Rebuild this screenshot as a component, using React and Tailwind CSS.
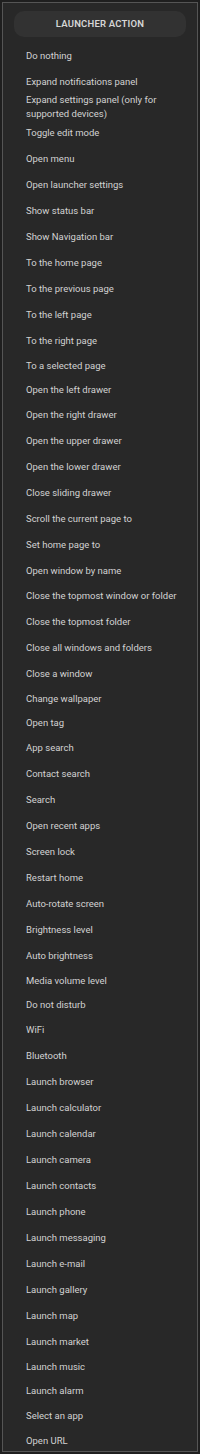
// Launcher action picker: header pill and a flat list of actions
const actions = [
  ["Do nothing", "h-[26px]"],
  ["Expand notifications panel", "h-[25px]"],
  ["Expand settings panel (only for supported devices)", "h-[25px]"],
  ["Toggle edit mode", "h-[27px]"],
  ["Open menu", "h-[26px]"],
  ["Open launcher settings", "h-[26px]"],
  ["Show status bar", "h-[26px]"],
  ["Show Navigation bar", "h-[26px]"],
  ["To the home page", "h-[26px]"],
  ["To the previous page", "h-[26px]"],
  ["To the left page", "h-[26px]"],
  ["To the right page", "h-[26px]"],
  ["To a selected page", "h-[24px]"],
  ["Open the left drawer", "h-[24px]"],
  ["Open the right drawer", "h-[26px]"],
  ["Open the upper drawer", "h-[26px]"],
  ["Open the lower drawer", "h-[26px]"],
  ["Close sliding drawer", "h-[26px]"],
  ["Scroll the current page to", "h-[26px]"],
  ["Set home page to", "h-[26px]"],
  ["Open window by name", "h-[25px]"],
  ["Close the topmost window or folder", "h-[26px]"],
  ["Close the topmost folder", "h-[26px]"],
  ["Close all windows and folders", "h-[26px]"],
  ["Close a window", "h-[26px]"],
  ["Change wallpaper", "h-[24px]"],
  ["Open tag", "h-[24px]"],
  ["App search", "h-[26px]"],
  ["Contact search", "h-[26px]"],
  ["Search", "h-[26px]"],
  ["Open recent apps", "h-[26px]"],
  ["Screen lock", "h-[26px]"],
  ["Restart home", "h-[26px]"],
  ["Auto-rotate screen", "h-[26px]"],
  ["Brightness level", "h-[26px]"],
  ["Auto brightness", "h-[26px]"],
  ["Media volume level", "h-[24px]"],
  ["Do not disturb", "h-[24px]"],
  ["WiFi", "h-[26px]"],
  ["Bluetooth", "h-[26px]"],
  ["Launch browser", "h-[26px]"],
  ["Launch calculator", "h-[26px]"],
  ["Launch calendar", "h-[26px]"],
  ["Launch camera", "h-[26px]"],
  ["Launch contacts", "h-[26px]"],
  ["Launch phone", "h-[26px]"],
  ["Launch messaging", "h-[26px]"],
  ["Launch e-mail", "h-[26px]"],
  ["Launch gallery", "h-[26px]"],
  ["Launch map", "h-[26px]"],
  ["Launch market", "h-[26px]"],
  ["Launch music", "h-[23px]"],
  ["Launch alarm", "h-[25px]"],
  ["Select an app", "h-[25px]"],
  ["Open URL", "h-[26px]"],
];

function App() {
  return (
    <div className="w-[200px] h-[1454px] bg-[#1f1f1f] p-[2px] font-['Roboto',sans-serif]">
      <div className="h-full border border-[#555555] bg-[#282828] flex flex-col overflow-hidden">
        {/* header pill */}
        <div className="mx-[11px] mt-[8px] h-[26px] shrink-0 rounded-[10px] bg-[#323232] flex items-center justify-center">
          <span className="text-[9.5px] font-semibold text-[#d6d6d6] tracking-[0.2px]">LAUNCHER ACTION</span>
        </div>

        {/* action list */}
        <div className="mt-[6px] flex flex-col">
          {actions.map(([label, h]) => (
            <div key={label} className={h + " shrink-0 flex items-center pl-[23px] pr-[14px]"}>
              <span className="text-[9.5px] leading-[14px] text-[#d2d2d2]">{label}</span>
            </div>
          ))}
        </div>
      </div>
    </div>
  );
}

export default App;
